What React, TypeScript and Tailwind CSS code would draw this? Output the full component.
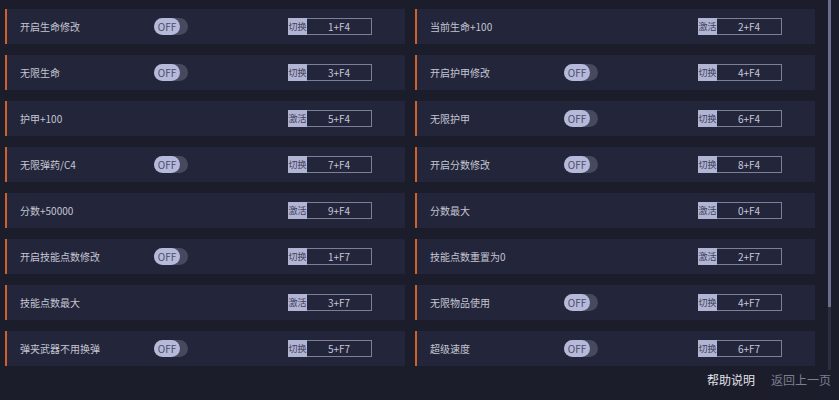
import React from 'react';

type Cheat = {
    label: string;
    toggle: boolean;
    key: string;
};

// ordre ligne par ligne : gauche, droite
const cheats: Cheat[] = [
    { label: '开启生命修改', toggle: true, key: '1+F4' },
    { label: '当前生命+100', toggle: false, key: '2+F4' },
    { label: '无限生命', toggle: true, key: '3+F4' },
    { label: '开启护甲修改', toggle: true, key: '4+F4' },
    { label: '护甲+100', toggle: false, key: '5+F4' },
    { label: '无限护甲', toggle: true, key: '6+F4' },
    { label: '无限弹药/C4', toggle: true, key: '7+F4' },
    { label: '开启分数修改', toggle: true, key: '8+F4' },
    { label: '分数+50000', toggle: false, key: '9+F4' },
    { label: '分数最大', toggle: false, key: '0+F4' },
    { label: '开启技能点数修改', toggle: true, key: '1+F7' },
    { label: '技能点数重置为0', toggle: false, key: '2+F7' },
    { label: '技能点数最大', toggle: false, key: '3+F7' },
    { label: '无限物品使用', toggle: true, key: '4+F7' },
    { label: '弹夹武器不用换弹', toggle: true, key: '5+F7' },
    { label: '超级速度', toggle: true, key: '6+F7' },
];

const OffSwitch: React.FC = () => (
    <div className="relative w-[34px] h-[17px] rounded-full bg-[#474a5e]">
        <div className="absolute left-0 top-0 w-[26px] h-[17px] rounded-full bg-[#b7b9da] flex items-center justify-center text-[10px] leading-none text-[#4a4d68]">
            OFF
        </div>
    </div>
);

const CheatRow: React.FC<{ cheat: Cheat }> = ({ cheat }) => (
    <div className="flex items-center h-[35px] bg-[#23253a]">
        <div className="w-[2px] h-full bg-[#d0612b]" />
        <div className="w-[147px] pl-[13px] text-[10px] text-[#c3c5d3] whitespace-nowrap">{cheat.label}</div>
        <div className="w-[134px] flex items-center">{cheat.toggle && <OffSwitch />}</div>
        <div className="flex h-[17px] w-[84px] border border-[#7d7f98]">
            <div className="w-[19px] -ml-px -my-px h-[17px] bg-[#b2b4d4] text-[9px] leading-[17px] text-[#3e4059] text-center whitespace-nowrap">
                {cheat.toggle ? '切换' : '激活'}
            </div>
            <div className="flex-1 text-center text-[10px] leading-[15px] text-[#c6c8da]">{cheat.key}</div>
        </div>
    </div>
);

const App: React.FC = () => {
    return (
        <div
            className="w-[839px] h-[400px] bg-[#1b1d2b] overflow-hidden"
            style={{ fontFamily: '"Noto Sans CJK SC", "Noto Sans", sans-serif' }}
        >
            <div className="flex h-[370px]">
                <div className="pl-[5px] pt-[9px]">
                    <div className="grid grid-cols-[400px_400px] gap-x-[10px] gap-y-[11px]">
                        {cheats.map((c, i) => (
                            <CheatRow key={i} cheat={c} />
                        ))}
                    </div>
                </div>
                {/* Scrollbar */}
                <div className="ml-[13px] w-[3px] h-full bg-[#2c2e40] flex flex-col">
                    <div className="h-[307px] bg-[#6d6f8e]" />
                </div>
            </div>

            {/* Footer */}
            <div className="flex justify-end gap-[16px] pr-[8px] mt-[2px] text-[12px] leading-[16px]">
                <span className="text-[#e2e3ea] cursor-pointer">帮助说明</span>
                <span className="text-[#7c7e92] cursor-pointer">返回上一页</span>
            </div>
        </div>
    );
};

export default App;
